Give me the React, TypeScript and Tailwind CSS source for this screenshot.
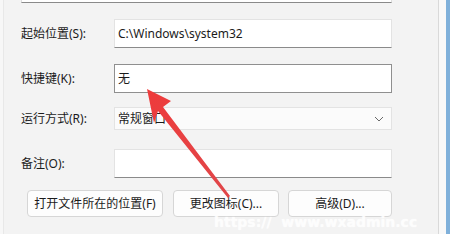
import React from "react";

const font = { fontFamily: '"Noto Sans", "Noto Sans CJK SC", sans-serif' };

function Label({ children }: { children: React.ReactNode }) {
  return (
    <div className="w-[93px] shrink-0 text-[12px] text-[#1b1b1b] leading-none">{children}</div>
  );
}

export default function App() {
  return (
    <div className="relative flex w-[450px] h-[234px] overflow-hidden bg-[#f3f3f3]" style={font}>
      <div className="w-[4px] shrink-0 bg-[#f7f7f7] border-r border-[#e8e8e8]" />
      <div className="w-[435px] shrink-0 flex flex-col pl-[17px] border-r border-[#d9d9d9]">
        <div className="w-[371px] h-[3px] bg-white border-x border-b border-[#8a8a8a] border-x-[#dedede]" />
        <div className="mt-[16px] flex items-center h-[29px]">
          <Label>起始位置(S):</Label>
          <div className="w-[278px] h-full bg-white border border-[#e3e3e3] border-b-[#8a8a8a] flex items-center pl-[3px] text-[12px] text-[#1b1b1b]">
            C:\Windows\system32
          </div>
        </div>
        <div className="mt-[16px] flex items-center h-[29px]">
          <Label>快捷键(K):</Label>
          <div className="w-[278px] h-full bg-white border border-[#8f8f8f] flex items-center pl-[3px] text-[12px] text-[#1b1b1b]">
            无
          </div>
        </div>
        <div className="mt-[14px] flex items-center h-[23px]">
          <Label>运行方式(R):</Label>
          <div className="w-[278px] h-full bg-[#fbfbfb] border border-[#e3e3e3] flex items-center justify-between pl-[3px] pr-[7px] text-[12px] text-[#1b1b1b]">
            <span>常规窗口</span>
            <svg width="10" height="6" viewBox="0 0 10 6" fill="none">
              <path d="M1 1 L5 5 L9 1" stroke="#6a6a6a" strokeWidth="1" />
            </svg>
          </div>
        </div>
        <div className="mt-[19px] flex items-center h-[29px]">
          <Label>备注(O):</Label>
          <div className="w-[278px] h-full bg-white border border-[#e3e3e3] border-b-[#8a8a8a]" />
        </div>
        <div className="mt-[12px] ml-[6px] flex h-[27px] gap-[10px] text-[12px] text-[#1b1b1b]">
          <div className="w-[136px] h-full bg-[#fdfdfd] border border-[#d6d6d6] rounded-[4px] flex items-center justify-center">
            打开文件所在的位置(F)
          </div>
          <div className="w-[106px] h-full bg-[#fdfdfd] border border-[#d6d6d6] rounded-[4px] flex items-center justify-center">
            更改图标(C)...
          </div>
          <div className="ml-[-1px] w-[104px] h-full bg-[#fdfdfd] border border-[#d6d6d6] rounded-[4px] flex items-center justify-center">
            高级(D)...
          </div>
        </div>
      </div>
      <div className="w-[7px] shrink-0 bg-[#f8f8f8]" />
      <div className="w-[4px] shrink-0 bg-[#7fb0da]" />

      <svg className="absolute left-0 top-0" width="450" height="234" viewBox="0 0 450 234">
        <defs>
          <linearGradient id="ag" x1="0" y1="0" x2="1" y2="1">
            <stop offset="0" stopColor="#ee3b3b" />
            <stop offset="1" stopColor="#e0474a" />
          </linearGradient>
        </defs>
        <polygon
          points="147,89 171,101 163,107 230,196 228,198 158,111 154,123"
          fill="url(#ag)"
        />
      </svg>

      <div
        className="absolute left-[214px] top-[215px] text-[14px] font-bold text-white opacity-90 whitespace-nowrap leading-none"
        style={{ fontFamily: '"DejaVu Sans", sans-serif', textShadow: "0 0 2px rgba(255,255,255,0.8)" }}
      >
        https://&nbsp;&nbsp;www.wxadmin.cc
      </div>
    </div>
  );
}
